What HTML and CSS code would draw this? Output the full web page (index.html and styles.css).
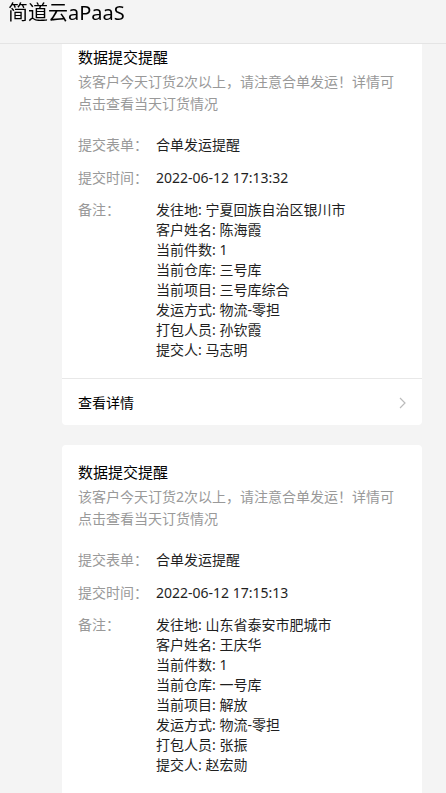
FILE: index.html
```html
<html lang="zh-cn">
  <head>
    <meta name="viewport" content="width=device-width, initial-scale=1" />
    <title>简道云aPaaS</title>
    <link rel="stylesheet" href="styles.css">
  </head>
  <body>
    <div class="top-bar">简道云aPaaS</div>
    <div class="msg-list">
      <div class="msg-card">
        <div class="msg-body">
          <div class="msg-title">数据提交提醒</div>
          <div class="msg-desc">该客户今天订货2次以上，请注意合单发运！详情可点击查看当天订货情况</div>
          <div class="msg-fields">
            <div class="msg-row">
              <div class="msg-label">提交表单：</div>
              <div class="msg-value">合单发运提醒</div>
            </div>
            <div class="msg-row">
              <div class="msg-label">提交时间：</div>
              <div class="msg-value">2022-06-12 17:13:32</div>
            </div>
            <div class="msg-row">
              <div class="msg-label">备注：</div>
              <div class="msg-value">
                <div>发往地: 宁夏回族自治区银川市</div>
                <div>客户姓名: 陈海霞</div>
                <div>当前件数: 1</div>
                <div>当前仓库: 三号库</div>
                <div>当前项目: 三号库综合</div>
                <div>发运方式: 物流-零担</div>
                <div>打包人员: 孙钦霞</div>
                <div>提交人: 马志明</div>
              </div>
            </div>
          </div>
        </div>
        <div class="msg-foot">
          <span>查看详情</span>
          <svg class="arrow" width="7" height="12" viewBox="0 0 7 12">
            <path d="M1 1 L6 6 L1 11" fill="none" stroke="#bbb" stroke-width="1.2" />
          </svg>
        </div>
      </div>

      <div class="msg-card">
        <div class="msg-body">
          <div class="msg-title">数据提交提醒</div>
          <div class="msg-desc">该客户今天订货2次以上，请注意合单发运！详情可点击查看当天订货情况</div>
          <div class="msg-fields">
            <div class="msg-row">
              <div class="msg-label">提交表单：</div>
              <div class="msg-value">合单发运提醒</div>
            </div>
            <div class="msg-row">
              <div class="msg-label">提交时间：</div>
              <div class="msg-value">2022-06-12 17:15:13</div>
            </div>
            <div class="msg-row">
              <div class="msg-label">备注：</div>
              <div class="msg-value">
                <div>发往地: 山东省泰安市肥城市</div>
                <div>客户姓名: 王庆华</div>
                <div>当前件数: 1</div>
                <div>当前仓库: 一号库</div>
                <div>当前项目: 解放</div>
                <div>发运方式: 物流-零担</div>
                <div>打包人员: 张振</div>
                <div>提交人: 赵宏勋</div>
              </div>
            </div>
          </div>
        </div>
        <div class="msg-foot">
          <span>查看详情</span>
          <svg class="arrow" width="7" height="12" viewBox="0 0 7 12">
            <path d="M1 1 L6 6 L1 11" fill="none" stroke="#bbb" stroke-width="1.2" />
          </svg>
        </div>
      </div>
    </div>
  </body>
</html>
```

FILE: styles.css
```css
body {
  margin: 0;
  background-color: #f4f4f4;
  font-family: "Segoe UI", "Noto Sans", "Noto Sans CJK SC", sans-serif;
  font-size: 14px;
  color: #1f1f1f;
}

/* fixed header, the list scrolls under it */
.top-bar {
  position: fixed;
  top: 0;
  left: 0;
  right: 0;
  z-index: 2;
  height: 43px;
  padding-left: 8px;
  font-size: 20px;
  line-height: 26px;
  color: #000;
  background-color: #f4f4f4;
  border-bottom: 1px solid #e4e4e4;
}

.msg-list {
  display: flex;
  flex-direction: column;
  gap: 20px;
  padding: 30px 0 20px 62px;
}

.msg-card {
  width: 360px;
  background-color: #fff;
  border-radius: 4px;
}

.msg-body {
  padding: 16px 16px 18px;
}

.msg-title {
  font-size: 15px;
  line-height: 22px;
  color: #000;
}

.msg-desc {
  margin-top: 3px;
  line-height: 22px;
  color: #999;
}

.msg-fields {
  display: flex;
  flex-direction: column;
  gap: 12.5px;
  margin-top: 20px;
}

.msg-row {
  display: flex;
  line-height: 20px;
}

.msg-label {
  width: 78px;
  flex-shrink: 0;
  color: #999;
}

.msg-value {
  color: #1f1f1f;
}

.msg-foot {
  display: flex;
  align-items: center;
  justify-content: space-between;
  padding: 14px 16px 12px;
  line-height: 20px;
  color: #000;
  border-top: 1px solid #e8e8e8;
}
```
